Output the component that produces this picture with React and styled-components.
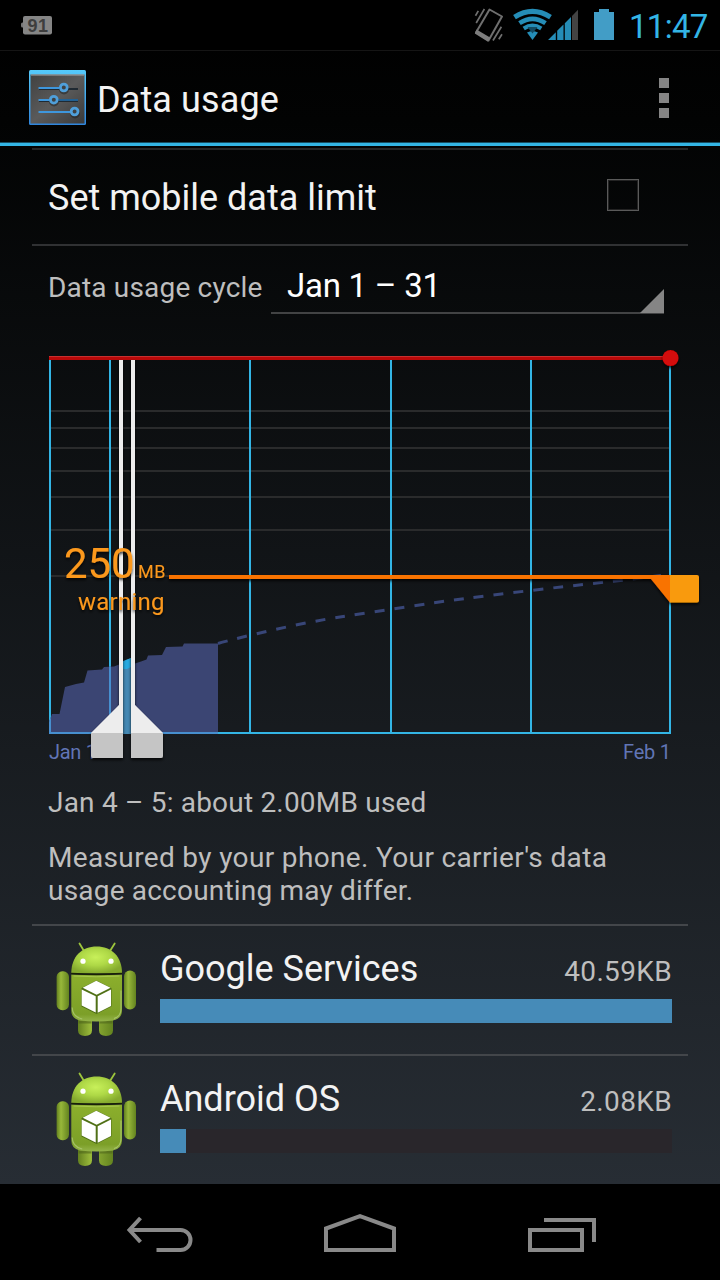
import styled, { createGlobalStyle } from "styled-components";

const GlobalStyle = createGlobalStyle`
  * {
    box-sizing: border-box;
  }
  body {
    margin: 0;
    background: #000000;
    font-family: Roboto, "Noto Sans", sans-serif;
  }
  svg {
    display: block;
    flex: none;
  }
`;
const Screen = styled.div`
  width: 720px;
  height: 1280px;
  display: flex;
  flex-direction: column;
  overflow: hidden;
  color: #f3f3f3;
  background: linear-gradient(#000000 0, #020303 120px, #272d34 1184px);
`;
const StatusBar = styled.div`
  height: 51px;
  display: flex;
  align-items: center;
  padding: 0 11px 0 21px;
  background: #000000;
  border-bottom: 1px solid #151515;
`;
const StatusIcons = styled.div`
  display: flex;
  margin-left: auto;
`;
const Clock = styled.div`
  width: 80px;
  margin-left: 14px;
  padding-top: 2px;
  font-size: 33px;
  line-height: 49px;
  letter-spacing: -0.7px;
  white-space: nowrap;
  color: #33b5e5;
`;
const ActionBar = styled.div`
  height: 95px;
  display: flex;
  align-items: center;
  padding: 1px 51px 0 29px;
  border-bottom: 3px solid #33b5e5;
  box-shadow: inset 0 -1px 0 #164d61;
`;
const Title = styled.h1`
  margin: 5px auto 0 11px;
  font-size: 36px;
  font-weight: 400;
  line-height: 44px;
  letter-spacing: 0.12px;
`;
const Overflow = styled.div`
  display: grid;
  gap: 5px;
  span {
    width: 10px;
    height: 10px;
    background: #858585;
  }
`;
const Content = styled.div`
  flex: 1;
  padding-top: 2px;
`;
const LimitRow = styled.div`
  height: 96px;
  margin: 0 32px;
  padding: 0 49px 0 16px;
  display: flex;
  align-items: center;
  justify-content: space-between;
  border-top: 2px solid #242526;
`;
const RowTitle = styled.span`
  padding-top: ${(props) => props.$drop || "0"};
  font-size: 36px;
  line-height: 44px;
`;
const CheckBox = styled.div`
  width: 32px;
  height: 32px;
  margin-bottom: 5px;
  border: 1px solid #5a5a5a;
  box-shadow: inset 0 0 0 1px #232323;
`;
const CycleRow = styled.div`
  height: 96px;
  margin: 0 32px;
  padding: 0 24px 0 16px;
  display: flex;
  border-top: 2px solid #303133;
`;
const CycleLabel = styled.span`
  width: 223px;
  padding-top: 25px;
  font-size: 28px;
  line-height: 33px;
  letter-spacing: 0.18px;
  white-space: nowrap;
  color: #bebebe;
`;
const Spinner = styled.div`
  flex: 1;
  height: 68px;
  padding-left: 16px;
  display: flex;
  align-items: flex-end;
  justify-content: space-between;
  border-bottom: 2px solid #424344;
  span {
    padding-bottom: 6px;
    font-size: 33px;
    line-height: 40px;
    letter-spacing: -0.25px;
    color: #ffffff;
  }
`;
const Corner = styled.div`
  width: 24px;
  height: 24px;
  margin-bottom: -1px;
  background: #858585;
  clip-path: polygon(100% 0, 100% 100%, 0 100%);
`;
const Note = styled.p`
  margin: 0;
  padding: ${(props) => props.$pad};
  font-size: 28px;
  line-height: 33px;
  letter-spacing: 0.2px;
  color: #bebebe;
`;
const NoteLine = styled.span`
  letter-spacing: 0.35px;
`;
const AppRow = styled.div`
  height: 130px;
  margin: 0 32px;
  padding: 16px 16px 0 24px;
  display: flex;
  gap: 24px;
  border-top: 2px solid #43464a;
`;
const AppInfo = styled.div`
  flex: 1;
  padding-top: 5px;
`;
const AppLine = styled.div`
  height: 52px;
  display: flex;
  justify-content: space-between;
  align-items: baseline;
`;
const Amount = styled.span`
  font-size: 28px;
  letter-spacing: 0.35px;
  color: #bebebe;
`;
const Track = styled.div`
  height: 24px;
  background: #29262b;
`;
const Fill = styled.div`
  height: 24px;
  background: #468bb8;
`;
const NavBar = styled.div`
  height: 96px;
  display: flex;
  padding: 30px 123px 0 126px;
  justify-content: space-between;
  background: #000000;
`;

const apps = [
  { name: "Google Services", amount: "40.59KB", percent: 100 },
  { name: "Android OS", amount: "2.08KB", percent: 5.1 },
];

const gridLines = [410, 427, 447, 470, 496, 529, 575];
const weekLines = [109, 249, 390, 530];

function NotificationIcon() {
  return (
    <svg width="32" height="20" viewBox="0 0 32 20">
      <rect x="0" y="7.500" width="4" height="5" rx="1.5" fill="#777" />
      <rect x="2" y="1" width="29" height="18.500" rx="2" fill="#858585" />
      <text
        x="6.5"
        y="16.5"
        fontSize="18"
        fontWeight="700"
        textLength="20.5"
        fontFamily="Liberation Sans, sans-serif"
        fill="#3e3e3e"
      >
        91
      </text>
    </svg>
  );
}

// vibrate, wifi, signal and battery share one strip
function SystemIcons() {
  return (
    <svg width="141" height="50" viewBox="474 0 141 50">
      <g fill="none" stroke="#6f6f6f" strokeWidth="1.7">
        <path
          d="M489.5 9.5 L502 16.5 L488.5 40.5 L476 32.5 Z"
          strokeWidth="2"
          strokeLinejoin="round"
        />
        <path d="M475.5 15.7l2.8-4.8M476.2 23l8.2-14M493 40.5l8.4-13.8M498.8 39.3l3.2-5" />
      </g>
      <path d="M476.5 29.5l14 8.3-2.5 4-13.2-8.300z" fill="#7d7d7d" />
      <g fill="none" stroke="#258db7">
        <path d="M514.5 17.2Q532.5 5.6 550.5 17.2" strokeWidth="5" />
        <path d="M519.5 23.2Q532.5 14.6 545.5 23.2" strokeWidth="4.6" />
        <path d="M523.7 28.5Q532.5 22.6 541.3 28.5" strokeWidth="4" />
      </g>
      <path d="M527 32.6Q532.5 29.5 538 32.6L532.5 40z" fill="#258db7" />
      <path d="M527.5 27h10l-5 6.5z" fill="#124b63" />
      <path d="M548 40l7.8-7.8V40zM557.2 30.8l6.3-6.3V40h-6.3zM564.8 23.2l6.2-6.2V40h-6.2z" fill="#258db7" />
      <path d="M572 16l6-6.3V40h-6z" fill="#434343" />
      <path d="M594 12h5V9h10v3h5v28h-20z" fill="#429dc6" />
    </svg>
  );
}

function SettingsIcon() {
  return (
    <svg width="57" height="55" viewBox="0 0 57 55">
      <defs>
        <linearGradient id="panel" x1="0" y1="0" x2="1" y2="1">
          <stop offset="0" stopColor="#414141" />
          <stop offset="0.5" stopColor="#5a5a5a" />
          <stop offset="1" stopColor="#3a3a3a" />
        </linearGradient>
        <linearGradient id="frame" x1="0" y1="0" x2="0" y2="1">
          <stop offset="0" stopColor="#55c9fa" />
          <stop offset="1" stopColor="#2f85dc" />
        </linearGradient>
      </defs>
      <rect width="57" height="55" rx="1.5" fill="url(#frame)" />
      <rect x="1.5" y="4.5" width="54" height="49" fill="url(#panel)" />
      <path d="M2 5h53" stroke="#a5a5a5" />
      <path d="M10 19h39M10 31h39" stroke="#202a32" strokeWidth="2" />
      <g stroke="#3e96dc" strokeWidth="2" fill="none">
        <path d="M9.500 18h22M9.500 30h12M9.500 42h32" />
        <path d="M28 30h21" stroke="#226092" />
      </g>
      <g fill="none" stroke="#202020" opacity="0.5" strokeWidth="3">
        <circle cx="35" cy="19.500" r="3.500" />
        <circle cx="25" cy="31.500" r="3.500" />
        <circle cx="46" cy="43.500" r="3.500" />
      </g>
      <g fill="#3f4142" stroke="#4f9fda" strokeWidth="2.800">
        <circle cx="34.800" cy="17.500" r="3.400" />
        <circle cx="24.800" cy="29.700" r="3.400" />
        <circle cx="45.600" cy="41.500" r="3.400" />
      </g>
    </svg>
  );
}

function AndroidIcon() {
  return (
    <svg width="80" height="96" viewBox="0 -0.500 80 96">
      <defs>
        <linearGradient id="limb">
          <stop offset="0" stopColor="#63801f" />
          <stop offset="0.35" stopColor="#98b83a" />
          <stop offset="1" stopColor="#63831f" />
        </linearGradient>
        <linearGradient id="torso" x1="0" y1="0" x2="0" y2="1">
          <stop offset="0" stopColor="#8caf2c" />
          <stop offset="0.85" stopColor="#7c9f28" />
          <stop offset="1" stopColor="#94b44a" />
        </linearGradient>
        <radialGradient id="head" cx="0.48" cy="0.4" r="0.6">
          <stop offset="0" stopColor="#c8f05a" />
          <stop offset="0.5" stopColor="#aed846" />
          <stop offset="1" stopColor="#85aa2e" />
        </radialGradient>
      </defs>
      <path d="M22 72h14v16q0 5-7 5.500q-7-.5-7-5.500zM43 72h14v16q0 5-7 5.500q-7-.5-7-5.500z" fill="url(#limb)" />
      <path d="M22.500 78h13v3h-13zM43.500 78h13v3h-13z" fill="#4e661b" opacity="0.6" />
      <rect x="0.600" y="28.700" width="12.400" height="39" rx="5.800" fill="url(#limb)" />
      <rect x="68" y="28" width="12" height="39" rx="5.800" fill="url(#limb)" />
      <path d="M23.500 1l4.500 7.500M58.700 1l-4.700 7.500" stroke="#9cc43c" strokeWidth="1.800" strokeLinecap="round" />
      <path d="M15.300 30.500C15.300 14 26 4 40.700 4S66 14 66 30.500Q40 31.500 15.300 30.500z" fill="url(#head)" />
      <path d="M15.300 32Q40 33.500 66 32v36q0 8-9 10q-16 1.800-33 0q-8.700-2-8.700-10z" fill="url(#torso)" />
      <path d="M15.300 31Q40 32.500 66 31" stroke="#182006" strokeWidth="1.400" fill="none" />
      <path d="M16.200 65q0 9 10 11.500M65 48v18q0 8-7 10" stroke="#bdd58b" strokeWidth="1.200" fill="none" opacity="0.6" />
      <path d="M17.500 33.500Q40 35 63.500 33.500" stroke="#b9d967" strokeWidth="1" fill="none" opacity="0.6" />
      <circle cx="27" cy="18.700" r="2.600" fill="#fff" />
      <circle cx="55" cy="18.700" r="2.600" fill="#fff" />
      <path d="M40.500 38L55.500 45.500V64L40.500 71.500 25.500 64V45.500z" fill="#507016" />
      <path d="M40.300 38.300L54.500 45.200 40.600 52.300 26.700 45.200zM25.700 47l14 6.700v16.400l-14-7zM55 47l-13.300 6.700v16.500L55 63.500z" fill="#fff" />
    </svg>
  );
}

function UsageChart() {
  return (
    <svg width="720" height="430" viewBox="0 340 720 430">
      <defs>
        <clipPath id="usedArea">
          <path d="M49 734V722L52 714H59.500L65 687 76 684 84 682.500 87.500 670.500 102 669.500 104 667 114 666.500 123 663 131 661 135 663.500 141 661.500 146.500 659.500 148 655.500 162 655 166 647 182.500 646.500 184 643.500H218V734z" />
        </clipPath>
        <filter id="shade" x="-20%" y="-20%" width="140%" height="150%">
          <feDropShadow dx="0" dy="2" stdDeviation="1.500" floodColor="#000" floodOpacity="0.8" />
        </filter>
      </defs>
      {gridLines.map((y) => (
        <rect key={y} x="51" y={y} width="618" height="2" fill="#2a2b2c" />
      ))}
      <g fill="#33b5e5">
        {weekLines.map((x) => (
          <rect key={x} x={x} y="360" width="2" height="373" />
        ))}
        <path d="M49 360h2v372h618V360h2v374H49z" />
      </g>
      <g clipPath="url(#usedArea)">
        <rect x="49" y="640" width="170" height="94" fill="#3b4573" />
        <path d="M50 640v93H218M110 640v92" stroke="#478fcf" strokeWidth="2" fill="none" />
      </g>
      <path
        d="M218 643.500C241 637 300 623 340 617S430 603 465 598.500 560 587 597 583 650 577 661 575.500"
        stroke="#384678"
        strokeWidth="3"
        strokeDasharray="10 10"
        fill="none"
      />
      <path d="M123 661l4-1 4-2v76h-8z" fill="#4488b3" />
      <path d="M123 661.500l4-2 4-1.500v9l-4 2h-4z" fill="#27a9df" />

      <rect x="49" y="356" width="621" height="4" fill="#b90808" />
      <rect x="49" y="356" width="621" height="1" fill="#c83030" />

      <g fontSize="20" fill="#6175b5">
        <text x="49" y="759" textLength="48">Jan 1</text>
        <text x="623" y="759" textLength="48">Feb 1</text>
      </g>
      <g filter="url(#shade)">
        <path d="M119 360h4v345h0v28H91l28-28zM131 360h4v345l28 28h-32z" fill="#ededed" />
        <path d="M91 733h32v25H93q-2 0-2-2zM131 733h32v23q0 2-2 2h-30z" fill="#c5c5c5" />
      </g>
      <g fill="#fb981d" filter="url(#shade)">
        <text x="64" y="578" fontSize="42" textLength="70.5">250</text>
        <text x="138" y="578" fontSize="18" textLength="27.500">MB</text>
        <text x="78" y="610" fontSize="24" textLength="86.500">warning</text>
      </g>
      <g filter="url(#shade)">
        <path d="M169 575H670v27.500L651 579H169z" fill="#f97306" />
        <path d="M670 575h27q2 0 2 2v23.500q0 2-2 2h-27z" fill="#f99a0b" />
        <circle cx="670.500" cy="358" r="8" fill="#d30808" />
      </g>
    </svg>
  );
}

function NavIcons() {
  return (
    <>
      <svg width="68" height="40" viewBox="126 1214 68 40" fill="none" stroke="#898989" strokeWidth="4">
        <path d="M130 1230h50.500a10 10 0 0 1 0 20H156.500" />
        <path d="M140.500 1218L129.500 1230l11 12" />
      </svg>
      <svg width="74" height="40" viewBox="324 1214 74 40" fill="none" stroke="#898989" strokeWidth="4">
        <path d="M326 1250v-21.500l34-12.300 34 12.300V1250z" />
      </svg>
      <svg width="69" height="40" viewBox="528 1214 69 40" fill="none" stroke="#898989" strokeWidth="4">
        <path d="M530 1230h52v20h-52zM544 1220h50v22" />
      </svg>
    </>
  );
}

export default function App() {
  return (
    <>
      <GlobalStyle />
      <Screen>
        <StatusBar>
          <NotificationIcon />
          <StatusIcons>
            <SystemIcons />
            <Clock>11:47</Clock>
          </StatusIcons>
        </StatusBar>
        <ActionBar>
          <SettingsIcon />
          <Title>Data usage</Title>
          <Overflow>
            <span />
            <span />
            <span />
          </Overflow>
        </ActionBar>
        <Content>
          <LimitRow>
            <RowTitle $drop="2px">Set mobile data limit</RowTitle>
            <CheckBox />
          </LimitRow>
          <CycleRow>
            <CycleLabel>Data usage cycle</CycleLabel>
            <Spinner>
              <span>Jan 1 – 31</span>
              <Corner />
            </Spinner>
          </CycleRow>
          <UsageChart />
          <Note $pad="16px 48px 0">Jan 4 – 5: about 2.00MB used</Note>
          <Note $pad="22px 48px 17px">
            <NoteLine>Measured by your phone. Your carrier's data</NoteLine>
            <br />
            usage accounting may differ.
          </Note>
          {apps.map((app) => (
            <AppRow key={app.name}>
              <AndroidIcon />
              <AppInfo>
                <AppLine>
                  <RowTitle>{app.name}</RowTitle>
                  <Amount>{app.amount}</Amount>
                </AppLine>
                <Track>
                  <Fill style={{ width: `${app.percent}%` }} />
                </Track>
              </AppInfo>
            </AppRow>
          ))}
        </Content>
        <NavBar>
          <NavIcons />
        </NavBar>
      </Screen>
    </>
  );
}
